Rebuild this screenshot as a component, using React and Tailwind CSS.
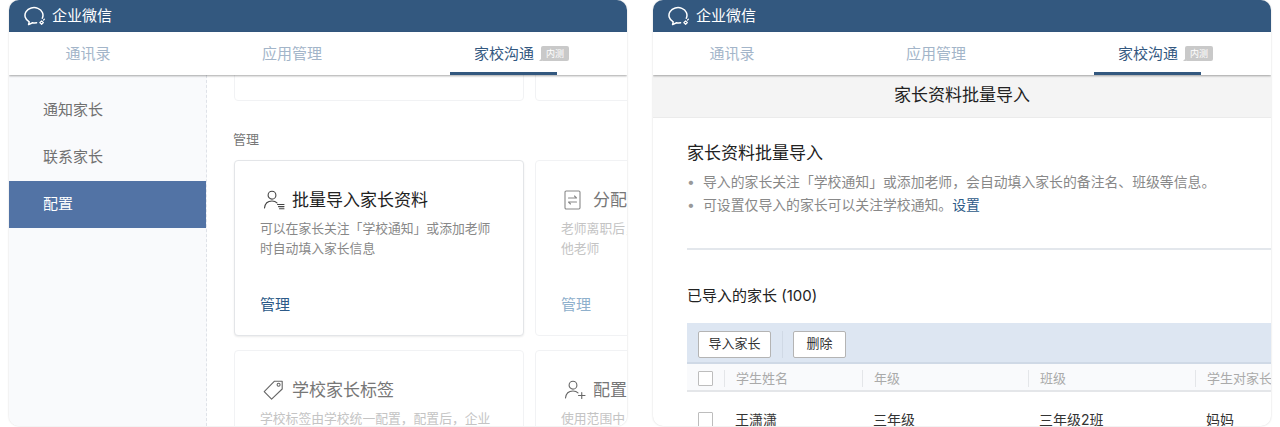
import React from "react";

const FONT = "font-['Inter','Noto_Sans_CJK_SC',sans-serif]";

function Logo() {
  return (
    <svg width="24" height="20" viewBox="0 0 24 20" fill="none" stroke="#fff" strokeWidth="1.5" strokeLinecap="round" strokeLinejoin="round">
      <path d="M18.3 12.2A9 7.7 0 1 0 5.2 15.8L4.6 18.6L8.6 16.7C9.8 17 11.2 17 12.6 16.8" />
      <path d="M15.8 16.6L17.6 15L19.4 16.6L17.6 18.3Z" strokeWidth="1.2" />
      <path d="M19.6 14L20.4 13.2" strokeWidth="1.2" />
    </svg>
  );
}

function PersonList() {
  return (
    <svg width="22" height="20" viewBox="0 0 22 20" fill="none" stroke="#444" strokeWidth="1.1" strokeLinecap="round">
      <circle cx="9" cy="5.2" r="3.9" />
      <path d="M1.5 18C2 13.4 5 11 9 11C11 11 12.8 11.6 14 12.8" />
      <path d="M14.5 14.5H21M15.5 16.6H21M16.5 18.7H21" />
    </svg>
  );
}

function PersonPlus() {
  return (
    <svg width="22" height="20" viewBox="0 0 22 20" fill="none" stroke="#666" strokeWidth="1.1" strokeLinecap="round">
      <circle cx="9" cy="5.2" r="3.9" />
      <path d="M1.5 18C2 13.4 5 11 9 11C11 11 12.8 11.6 14 12.8" />
      <path d="M14.5 15.5H21M17.75 12.5V18.5" />
    </svg>
  );
}

function Tag() {
  return (
    <svg width="21" height="20" viewBox="0 0 21 20" fill="none" stroke="#666" strokeWidth="1.1" strokeLinejoin="round">
      <path d="M11.5 1.2H19.2V9L8.6 19.2L1.2 11.6Z" />
      <circle cx="15.6" cy="4.8" r="1.5" />
    </svg>
  );
}

function Doc() {
  return (
    <svg width="17" height="20" viewBox="0 0 17 20" fill="none" stroke="#888" strokeWidth="1.1" strokeLinecap="round" strokeLinejoin="round">
      <rect x="1" y="1" width="15" height="18" rx="1.2" />
      <path d="M4.5 8H12.5L10.5 6M12.5 12H4.5L6.5 14" />
    </svg>
  );
}

function Card({ icon, title, lines, link, muted, linkGap = "mt-[35px]" }) {
  return (
    <div className={`w-[290px] h-[176px] shrink-0 rounded-[4px] border bg-white pl-[25px] pt-[27px] ${muted ? "border-[#f1f2f4]" : "border-[#e3e5e8] shadow-[0_1px_2px_rgba(0,0,0,0.08)]"}`}>
      <div className={`h-6 flex items-center whitespace-nowrap text-[17px] leading-6 ${muted ? "text-[#777]" : "text-[#222]"}`}>
        {icon && <span className="w-[32px] shrink-0 flex justify-start pl-[3px]">{icon}</span>}
        {title}
      </div>
      <div className={`mt-[7px] text-[12.8px] leading-[20px] whitespace-nowrap h-[40px] ${muted ? "text-[#c4c4c4]" : "text-[#888]"}`}>
        {lines.map((l) => (
          <div key={l}>{l}</div>
        ))}
      </div>
      {link && (
        <div className={`${linkGap} text-[15px] leading-[22px] ${muted ? "text-[#8fb0cc]" : "text-[#2c5a88]"}`}>管理</div>
      )}
    </div>
  );
}

function Shell({ children }) {
  return (
    <div className="w-[618px] h-[426px] shrink-0 flex flex-col overflow-hidden rounded-[10px] bg-white shadow-[0_0_2px_rgba(0,0,0,0.18)]">
      <div className="h-[32px] shrink-0 bg-[#33587f] flex items-center pl-[15px] text-white text-[15px] gap-[4px]">
        <Logo />
        <span>企业微信</span>
      </div>
      <div className="relative z-10 h-[43px] shrink-0 bg-white flex text-[15px] text-[#a3b5c9] shadow-[0_1px_2px_rgba(0,0,0,0.35)]">
        <div className="w-[158px] pt-[1px] flex items-center justify-center">通讯录</div>
        <div className="w-[250px] pt-[1px] flex items-center justify-center">应用管理</div>
        <div className="ml-[33px] w-[107px] pt-[4px] flex items-center pl-[24px] border-b-[3px] border-[#33587f] text-[#33587f] whitespace-nowrap">
          <span>家校沟通</span>
          <span className="relative ml-[7px] -mt-[1px] w-[28px] h-[15px] rounded-[2px] bg-[#c9c9c9] text-white text-[9px] leading-[15px] text-center shrink-0">
            内测
            <span className="absolute -left-[2px] bottom-0 w-0 h-0 border-l-[3px] border-l-transparent border-b-[3px] border-b-[#c9c9c9]" />
          </span>
        </div>
      </div>
      {children}
    </div>
  );
}

function NavItem({ label, active }) {
  return (
    <div className={`h-[47px] flex items-center pl-[34px] text-[15px] ${active ? "bg-[#5273a5] text-white" : "text-[#707070]"}`}>{label}</div>
  );
}

function LeftWindow() {
  return (
    <Shell>
      <div className="flex flex-1 min-h-0">
        <div className="w-[198px] shrink-0 bg-[#f9fafc] border-r border-dashed border-[#dfe2e8] pt-[12px]">
          <NavItem label="通知家长" />
          <NavItem label="联系家长" />
          <NavItem label="配置" active />
        </div>
        <div className="flex-1 min-w-0 pl-[27px] overflow-hidden">
          <div className="flex gap-[11px] -mt-[150px]">
            <Card muted title="" lines={[]} link linkGap="mt-[32px]" />
            <Card muted title="" lines={[]} link linkGap="mt-[32px]" />
          </div>
          <div className="mt-[28px] -ml-px text-[13px] leading-[20px] text-[#777]">管理</div>
          <div className="mt-[11px] flex gap-[11px]">
            <Card icon={<PersonList />} title="批量导入家长资料" lines={["可以在家长关注「学校通知」或添加老师", "时自动填入家长信息"]} link />
            <Card muted icon={<Doc />} title="分配" lines={["老师离职后，", "他老师"]} link />
          </div>
          <div className="mt-[14px] flex gap-[11px]">
            <Card muted icon={<Tag />} title="学校家长标签" lines={["学校标签由学校统一配置，配置后，企业"]} />
            <Card muted icon={<PersonPlus />} title="配置" lines={["使用范围中"]} />
          </div>
        </div>
      </div>
    </Shell>
  );
}

const COLS = ["w-[37px]", "w-[138px]", "w-[166px]", "w-[167px]", "flex-1"];

function Check() {
  return <span className="block w-[15px] h-[15px] border border-[#bdbdbd] rounded-[1px] bg-white" />;
}

function RightWindow() {
  return (
    <Shell>
      <div className="flex-1 min-h-0 overflow-hidden">
        <div className="h-[43px] bg-[#f4f4f4] border-b border-[#ebebeb] flex items-center justify-center text-[17px] text-[#222]">家长资料批量导入</div>
        <div className="pl-[34px]">
          <div className="mt-[23px] text-[17px] leading-6 text-[#222]">家长资料批量导入</div>
          <ul className="mt-[6px] text-[13.85px] leading-[23px] text-[#888]">
            <li className="flex"><span className="w-[16px] text-[#999]">•</span>导入的家长关注「学校通知」或添加老师，会自动填入家长的备注名、班级等信息。</li>
            <li className="flex"><span className="w-[16px] text-[#999]">•</span>可设置仅导入的家长可以关注学校通知。<span className="text-[#2c5a88]">设置</span></li>
          </ul>
          <div className="mt-[31px] h-[2px] bg-[#e3e7ec]" />
          <div className="mt-[35px] text-[15px] leading-[22px] text-[#222]">已导入的家长 (100)</div>
          <div className="mt-[16px] h-[41px] bg-[#dde6f2] border-b-2 border-[#cfd9e6] flex items-center pl-[11px] pt-[3px]">
            <button className="w-[73px] h-[27px] bg-white border border-[#b4b4b4] rounded-[2px] text-[13px] text-[#333]">导入家长</button>
            <span className="mx-[10.5px] w-px h-[27px] bg-[#d0d9e5]" />
            <button className="w-[53px] h-[27px] bg-white border border-[#b4b4b4] rounded-[2px] text-[13px] text-[#333]">删除</button>
          </div>
          <div className="h-[28px] pt-[2px] bg-[#f9fafc] border-b-2 border-[#e4e6e9] flex items-center text-[13px] text-[#aaa]">
            <div className={`${COLS[0]} pl-[11px]`}><Check /></div>
            <div className={`${COLS[1]} border-l border-[#e4e6e9] pl-[11px] leading-[17px]`}>学生姓名</div>
            <div className={`${COLS[2]} border-l border-[#e4e6e9] pl-[11px] leading-[17px]`}>年级</div>
            <div className={`${COLS[3]} border-l border-[#e4e6e9] pl-[11px] leading-[17px]`}>班级</div>
            <div className={`${COLS[4]} border-l border-[#e4e6e9] pl-[11px] leading-[17px] whitespace-nowrap overflow-hidden`}>学生对家长</div>
          </div>
          <div className="mt-[19px] flex items-center text-[14px] leading-[17px] text-[#333]">
            <div className={`${COLS[0]} pl-[11px]`}><Check /></div>
            <div className={`${COLS[1]} pl-[11px]`}>王潇潇</div>
            <div className={`${COLS[2]} pl-[11px]`}>三年级</div>
            <div className={`${COLS[3]} pl-[11px]`}>三年级2班</div>
            <div className={`${COLS[4]} pl-[11px]`}>妈妈</div>
          </div>
        </div>
      </div>
    </Shell>
  );
}

export default function App() {
  return (
    <div className={`w-[1280px] h-[427px] overflow-hidden bg-white flex gap-[26px] pl-[9px] ${FONT}`}>
      <LeftWindow />
      <RightWindow />
    </div>
  );
}
